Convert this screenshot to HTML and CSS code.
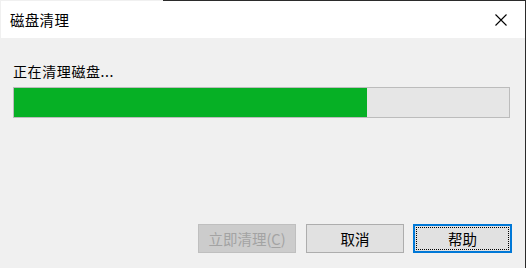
FILE: index.html
```html
<!DOCTYPE html>
<html lang="zh-CN">
<head>
<meta charset="utf-8">
<title>磁盘清理</title>
<link rel="stylesheet" href="styles.css">
</head>
<body>
<div class="window">
  <div class="topline"></div>
  <div class="titlebar">
    <span class="title">磁盘清理</span>
    <span class="close">
      <svg width="12" height="12" viewBox="0 0 12 12"><path d="M0.5 0.5 L11.5 11.5 M11.5 0.5 L0.5 11.5" stroke="#000" stroke-width="1.1" fill="none"/></svg>
    </span>
  </div>
  <div class="body">
    <div class="label">正在清理磁盘...</div>
    <div class="progress"><div class="fill" style="width:71.3%"></div></div>
    <div class="spacer"></div>
    <div class="buttons">
      <button class="btn disabled">立即清理(<u>C</u>)</button>
      <button class="btn cancel">取消</button>
      <button class="btn default"><span class="focus">帮助</span></button>
    </div>
  </div>
</div>
</body>
</html>
```
FILE: styles.css
```css
html, body {
  margin: 0;
  padding: 0;
  background: #f0f0f0;
}
body {
  font-family: "Noto Sans CJK SC", "Noto Sans", sans-serif;
  color: #000;
}
.window {
  position: relative;
  width: 525px;
  height: 268px;
  border-right: 1px solid #2b2b2b;
  background: #f0f0f0;
  display: flex;
  flex-direction: column;
}
.topline {
  position: absolute;
  left: 163px;
  right: -1px;
  top: 0;
  height: 1px;
  background: #2b2b2b;
}
.titlebar {
  margin-top: 1px;
  margin-left: 1px;
  height: 37px;
  background: #fff;
  display: flex;
  align-items: center;
  justify-content: space-between;
  padding: 0 18px 0 9px;
}
.title {
  font-size: 14.5px;
  letter-spacing: 0.3px;
  line-height: 16px;
  margin-top: 1px;
}
.close {
  display: flex;
  width: 12px;
  height: 12px;
  margin-top: 1px;
}
.body {
  flex: 1;
  display: flex;
  flex-direction: column;
  padding: 25px 13px 15px 13px;
}
.label {
  font-size: 14px;
  letter-spacing: 0.6px;
  line-height: 16px;
  height: 16px;
}
.progress {
  margin-top: 8px;
  width: 495px;
  height: 29px;
  border: 1px solid #bcbcbc;
  background: #e6e6e6;
}
.fill {
  height: 100%;
  background: #06b025;
}
.spacer {
  flex: 1;
}
.buttons {
  display: flex;
  justify-content: flex-end;
}
.btn {
  font-family: "Noto Sans CJK SC", "Noto Sans", sans-serif;
  font-size: 14.5px;
  width: 98px;
  height: 29px;
  padding: 0;
  margin: 0;
  border: 1px solid #adadad;
  background: #e1e1e1;
  color: #000;
  line-height: 16px;
  display: flex;
  align-items: center;
  justify-content: center;
  box-sizing: border-box;
}
.btn.disabled {
  background: #cccccc;
  border-color: #bfbfbf;
  color: #a3a3a3;
  margin-right: 10px;
}
.btn.disabled u {
  text-underline-offset: 2px;
}
.btn.cancel {
  margin-right: 9px;
}
.btn.default {
  border: 2px solid #0078d7;
  padding: 1px;
  width: 99px;
}
.focus {
  flex: 1;
  align-self: stretch;
  display: flex;
  align-items: center;
  justify-content: center;
  border: 1px dotted #000;
}
```
